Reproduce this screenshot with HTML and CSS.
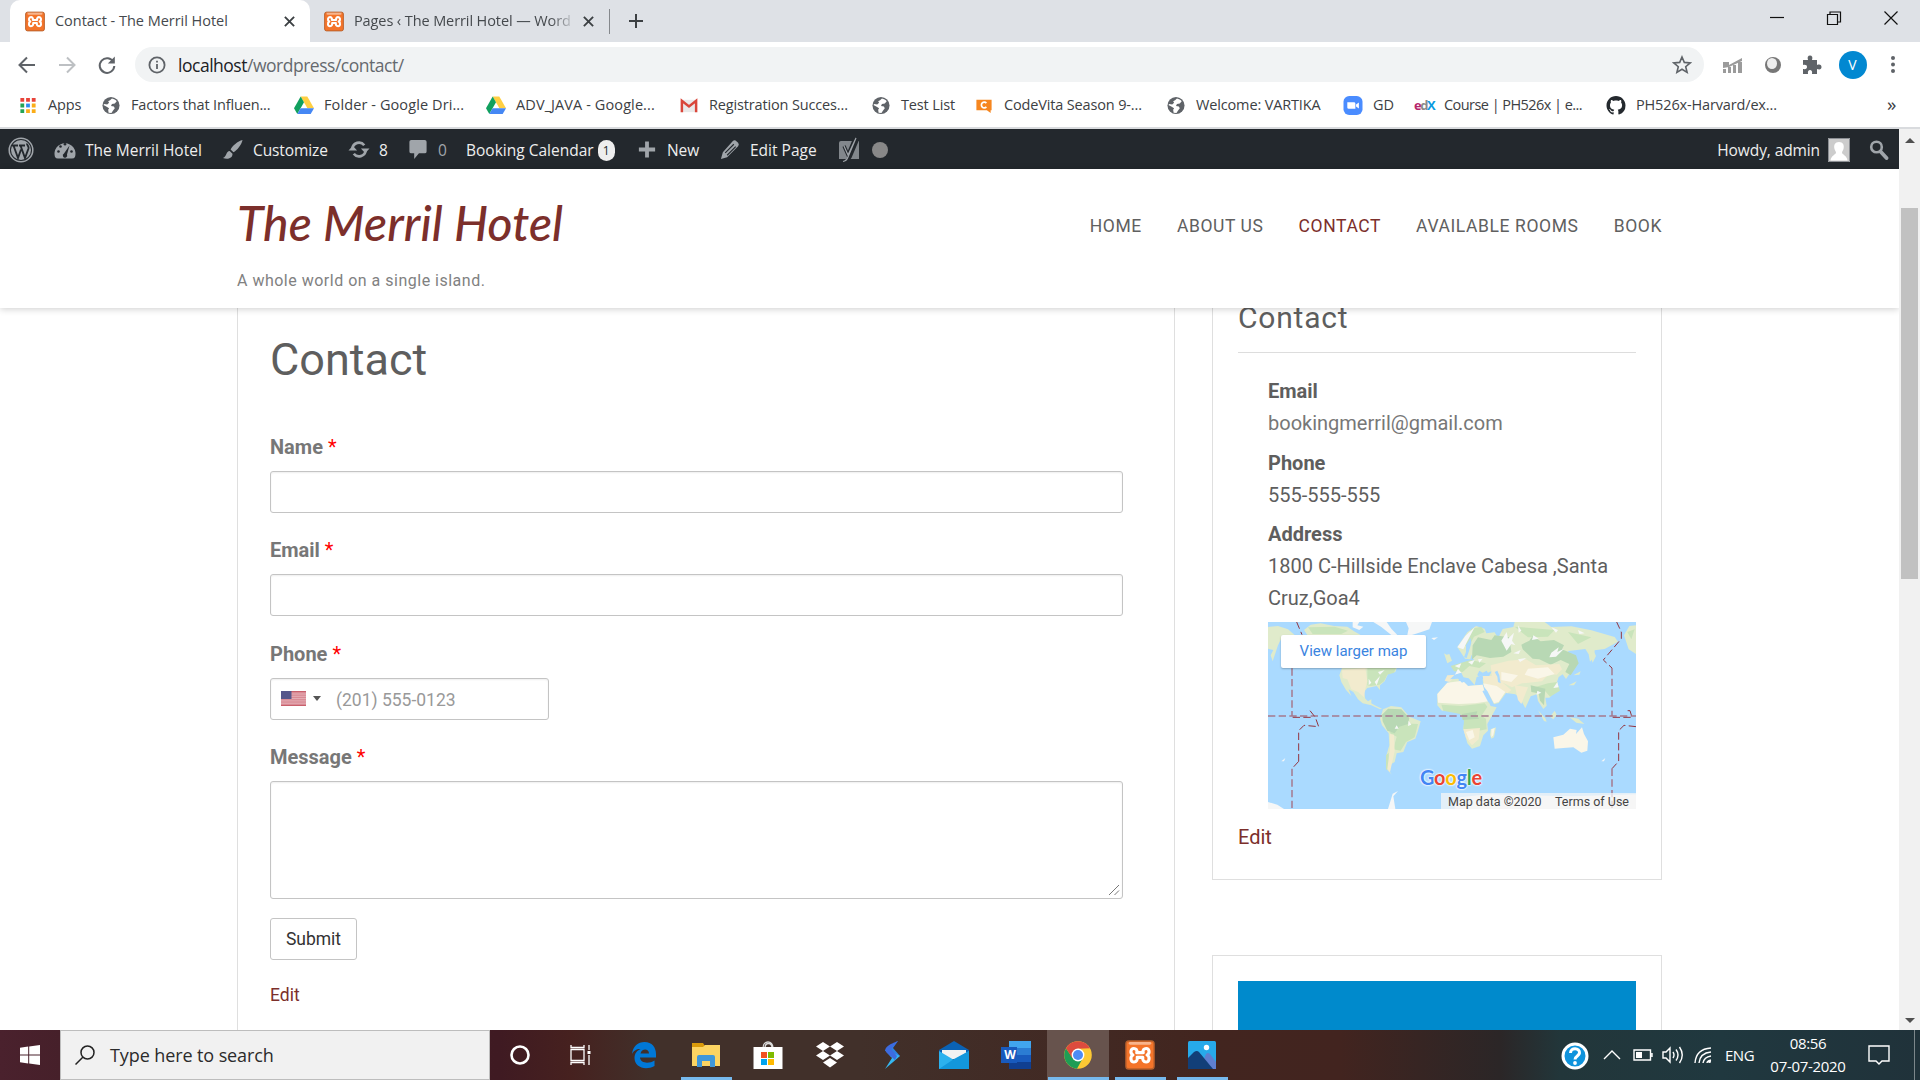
FILE: index.html
```html
<!DOCTYPE html>
<html lang="en">
<head>
<meta charset="utf-8">
<title>Contact - The Merril Hotel</title>
<link rel="stylesheet" href="styles.css">
</head>
<body>
<svg class="defs" width="0" height="0" aria-hidden="true">
  <symbol id="xampp" viewBox="0 0 32 32">
    <rect x="1" y="1" width="30" height="30" rx="3" fill="#f4742a" stroke="#b9602b" stroke-width="1.500"/>
    <rect x="4" y="2" width="24" height="3" rx="1.500" fill="#f8b48c"/>
    <path d="M12.500 13.500c1-3-1-4.500-3-4.500-3.500 0-4.500 5-1 7-3.500 2-2.500 7.500 1 7.500 3 0 4-2.500 3.500-5h6c-.5 2.500.5 5 3.500 5 3.500 0 4.500-5.500 1-7.500 3.500-2 2.500-7-1-7-2 0-4 1.500-3 4.500z" fill="none" stroke="#fff" stroke-width="3.300" stroke-linejoin="round"/>
  </symbol>
  <symbol id="globe" viewBox="0 0 20 20">
    <circle cx="10" cy="10" r="9" fill="#5f6368"/>
    <path d="M11 2.500c2 .5 4 1.500 5 3l-2 2.500-3 .5-1 2 3 .5 1 2-2 2.500-1.500 2.500-3-.5-.5-3 1-1.500-3-2-3-1.500 1-1 3 .5 2-2-1-1.500 2-1z" fill="#fff"/>
  </symbol>
  <symbol id="drive" viewBox="0 0 20 18">
    <path d="M6.700 0h6.600L20 11.700h-6.600z" fill="#ffcf42"/>
    <path d="M6.700 0L10 5.800 3.300 17.500 0 11.700z" fill="#11a05e"/>
    <path d="M6.600 11.700H20l-3.300 5.800H3.300z" fill="#4587f4"/>
  </symbol>
</svg>

<header class="browser">
  <div class="tabstrip">
    <div class="tab tab-active">
      <svg class="fav"><use href="#xampp"/></svg>
      <span class="tab-title">Contact - The Merril Hotel</span>
      <svg class="tab-close" viewBox="0 0 10 10"><path d="M.8.8l8.400 8.400M9.200.8L.8 9.200"/></svg>
    </div>
    <div class="tab tab-idle">
      <svg class="fav"><use href="#xampp"/></svg>
      <span class="tab-title fade">Pages ‹ The Merril Hotel — Word</span>
      <svg class="tab-close" viewBox="0 0 10 10"><path d="M.8.8l8.400 8.400M9.200.8L.8 9.200"/></svg>
    </div>
    <svg class="new-tab" viewBox="0 0 16 16"><path d="M8 1v14M1 8h14"/></svg>
    <div class="win-buttons">
      <svg viewBox="0 0 16 16"><path d="M1 7.500h14"/></svg>
      <svg viewBox="0 0 16 16"><path d="M1.500 4.500h10v10h-10zM4 4.500v-2.500h10.500v10h-3"/></svg>
      <svg viewBox="0 0 16 16"><path d="M1.500 1.500l13 13M14.500 1.500l-13 13"/></svg>
    </div>
  </div>

  <div class="toolbar">
    <div class="nav-buttons">
      <svg viewBox="0 0 20 20"><path d="M18 10H3M10 2.500L2.500 10l7.500 7.500"/></svg>
      <svg class="dim" viewBox="0 0 20 20"><path d="M2 10h15M10 2.500l7.500 7.500-7.500 7.500"/></svg>
      <svg viewBox="0 0 20 20"><path d="M16.500 7.200A7.300 7.300 0 1 0 17.300 11"/><path d="M17.800 1.500v7h-7z" class="solid"/></svg>
    </div>
    <div class="omnibox">
      <svg class="info" viewBox="0 0 18 18"><circle cx="9" cy="9" r="7.600"/><path d="M9 8v5M9 4.800v1.700"/></svg>
      <span class="url"><b>localhost</b>/wordpress/contact/</span>
      <svg class="star" viewBox="0 0 20 20"><path d="M10 2l2.300 5.400 5.900.5-4.500 3.800 1.400 5.700L10 14.300l-5.100 3.100 1.400-5.700-4.500-3.800 5.900-.5z"/></svg>
    </div>
    <div class="extensions">
      <svg viewBox="0 0 22 22"><g fill="#9b9b9b"><path d="M1 19v-4h3v4zM6 19v-6h3v6zM11 19v-8h3v8zM16 19V8h4v11z"/><path d="M1 8h6v3l13-7v3L7 13l-6 1z"/></g></svg>
      <svg viewBox="0 0 22 22"><circle cx="11" cy="11" r="8" fill="#777"/><ellipse cx="10" cy="9.500" rx="5" ry="5.500" fill="#eee"/></svg>
      <svg viewBox="0 0 22 22"><path d="M2 6h5c-1-3 0-4.500 2-4.500s3 1.500 2 4.500h5v5c3-1 4.500 0 4.500 2s-1.500 3-4.500 2v5h-5c.5-3-.5-4-2-4s-2.500 1-2 4H2v-5c3 .5 4-.5 4-2s-1-2.500-4-2z" fill="#5f6368"/></svg>
      <span class="profile">V</span>
      <svg viewBox="0 0 22 22"><g fill="#5f6368"><circle cx="11" cy="4" r="2"/><circle cx="11" cy="10.500" r="2"/><circle cx="11" cy="17" r="2"/></g></svg>
    </div>
  </div>

  <nav class="bookmarks">
    <a><svg viewBox="0 0 20 20"><g fill="#e8433a"><path d="M2 2h4v4H2zM8 2h4v4H8zM14 2h4v4h-4z"/></g><path d="M2 8h4v4H2zM2 14h4v4H2z" fill="#23a455"/><path d="M8 8h4v4H8z" fill="#2d8cf0"/><path d="M14 8h4v4h-4zM8 14h4v4H8zM14 14h4v4h-4z" fill="#fbad18"/></svg><span>Apps</span></a>
    <a><svg><use href="#globe"/></svg><span>Factors that Influen...</span></a>
    <a class="wide"><svg><use href="#drive"/></svg><span>Folder - Google Dri...</span></a>
    <a class="wide"><svg><use href="#drive"/></svg><span>ADV_JAVA - Google...</span></a>
    <a><svg viewBox="0 0 20 20"><path d="M2 4h16v13H2z" fill="#e9e9e9"/><path d="M2.500 17V5l7.500 6 7.500-6v12" fill="none" stroke="#d9463a" stroke-width="2.600"/></svg><span>Registration Succes...</span></a>
    <a><svg><use href="#globe"/></svg><span>Test List</span></a>
    <a><svg viewBox="0 0 20 20"><path d="M2 4h16v11h-1v3l-4-3H2z" fill="#f6861f"/><path d="M12.500 7.500a3 3 0 1 0 0 4" fill="none" stroke="#fff" stroke-width="1.800"/></svg><span>CodeVita Season 9-...</span></a>
    <a><svg><use href="#globe"/></svg><span>Welcome: VARTIKA</span></a>
    <a><svg viewBox="0 0 20 20"><rect width="20" height="20" rx="6" fill="#4a8cff"/><path d="M4 6.500h7a1.500 1.500 0 0 1 1.500 1.500v5.500h-7A1.500 1.500 0 0 1 4 12zM13.200 9l3-2.200v6.400l-3-2.200z" fill="#fff"/></svg><span>GD</span></a>
    <a class="tight"><i class="edx"><b>e</b><em>d</em><u>X</u></i><span>Course | PH526x | e...</span></a>
    <a><svg viewBox="0 0 16 16"><path fill="#24292e" d="M8 0C3.580 0 0 3.580 0 8c0 3.540 2.290 6.530 5.470 7.590.4.070.55-.17.55-.38 0-.19-.01-.82-.01-1.490-2.010.37-2.530-.49-2.690-.94-.09-.23-.48-.94-.82-1.130-.28-.15-.68-.52-.01-.53.63-.01 1.080.58 1.230.82.72 1.210 1.870.87 2.330.66.070-.52.28-.87.51-1.070-1.780-.2-3.640-.89-3.640-3.950 0-.87.31-1.590.82-2.150-.08-.2-.36-1.020.08-2.120 0 0 .67-.21 2.200.82.64-.18 1.320-.27 2-.27s1.360.09 2 .27c1.530-1.040 2.200-.82 2.200-.82.44 1.100.16 1.920.08 2.120.51.56.82 1.270.82 2.150 0 3.070-1.870 3.750-3.650 3.950.29.25.54.73.54 1.480 0 1.070-.01 1.930-.01 2.200 0 .21.15.46.55.38A8.010 8.010 0 0 0 16 8c0-4.420-3.580-8-8-8z"/></svg><span>PH526x-Harvard/ex...</span></a>
    <span class="more">»</span>
  </nav>
</header>

<div class="viewport">
  <div class="page">
    <div class="adminbar">
      <svg class="ab-logo" viewBox="0 0 26 26"><circle cx="13" cy="13" r="11.800" fill="none" stroke="#a0a5aa" stroke-width="1.500"/><circle cx="13" cy="13" r="10" fill="#a0a5aa"/><path d="M4 8.500h6M5.500 8.500L10 21l3-8.500M11 8.500h6M12.500 8.500L17 21l3.500-9.500c.8-2.500-1.800-3-1.500-5" fill="none" stroke="#23282d" stroke-width="1.900"/></svg>
      <div class="ab ab-site"><svg viewBox="0 0 22 20"><path d="M1 17.500a10.500 10.500 0 1 1 20 0q-1 1.500-3 1.500H4q-2 0-3-1.500z" fill="#a0a5aa"/><g fill="#23282d"><circle cx="4.500" cy="12" r="1.300"/><circle cx="6.500" cy="7" r="1.300"/><circle cx="11" cy="4.800" r="1.300"/><circle cx="17.500" cy="12" r="1.300"/><path d="M15.500 6l-2.500 9a2.200 2.200 0 1 1-3-1z"/></g></svg><span>The Merril Hotel</span></div>
      <div class="ab ab-customize"><svg viewBox="0 0 22 22"><path d="M21 1c-5 1-11 6.500-12.500 10l3 3C15 12 20 6 21 1zM7.500 12.500c-4 .5-2.500 5-7 7.500 4 1.500 10 1 10-4.500z" fill="#a0a5aa"/></svg><span>Customize</span></div>
      <div class="ab ab-updates"><svg viewBox="0 0 22 22"><g fill="none" stroke="#a0a5aa" stroke-width="2.800"><path d="M4 10a7 7 0 0 1 12.500-3.500M18 12A7 7 0 0 1 5.500 15.500"/></g><path d="M13 10h9l-4.500 5zM0 12h9L4.500 7z" fill="#a0a5aa"/></svg><span>8</span></div>
      <div class="ab ab-comments"><svg viewBox="0 0 22 22"><path d="M4 1h14q2 0 2 2v10q0 2-2 2h-6l-5 6v-6H4q-2 0-2-2V3q0-2 2-2z" fill="#a0a5aa"/></svg><span>0</span></div>
      <div class="ab ab-booking"><span>Booking Calendar</span><span class="badge">1</span></div>
      <div class="ab ab-new"><svg viewBox="0 0 22 22"><path d="M11 2.500v17M2.500 11h17" stroke="#a0a5aa" stroke-width="4"/></svg><span>New</span></div>
      <div class="ab ab-edit"><svg viewBox="0 0 22 22"><path d="M14 2q2-1.500 4 .5l1.500 1.500q1.500 2 0 3.500L8 19l-6.500 2 2-7z" fill="#a0a5aa"/><path d="M15 5.500L6 14.500M17 8l-9 9" stroke="#23282d" stroke-width="1.200"/></svg><span>Edit Page</span></div>
      <svg class="ab-yoast" viewBox="0 0 22 26"><path d="M3 4h18v18H1V6q0-2 2-2z" fill="#82878c"/><path d="M6 9l4 9L17 1h3l-8 19q-2 4-6 5" fill="none" stroke="#23282d" stroke-width="3.400"/><path d="M6 9l4 9L18 1l-8 19q-1.500 4-5 4.500" fill="none" stroke="#a0a5aa" stroke-width="1.200"/></svg>
      <i class="dot"></i>
      <div class="ab-right"><span>Howdy, admin</span>
        <svg class="gravatar" viewBox="0 0 22 24"><path d="M0 0h22v24H0z" fill="#ccc"/><path d="M11 4c4 0 5.500 3 4.500 7-.4 1.500-1.500 2.500-1.500 3.500 0 2 5 3 5.500 8h-17c.5-5 5.500-6 5.500-8 0-1-1.100-2-1.500-3.500C5.500 7 7 4 11 4z" fill="#fff"/><path d="M.5.5h21v23H.5z" fill="none" stroke="#8c8f94"/></svg>
        <svg class="ab-search" viewBox="0 0 20 20"><circle cx="7.500" cy="7" r="5.300" fill="none" stroke="#a0a5aa" stroke-width="2.600"/><path d="M11.500 11.500l6 6.500" stroke="#a0a5aa" stroke-width="3.800" stroke-linecap="round"/></svg>
      </div>
    </div>

    <div class="site-header">
      <div class="brand">
        <div class="site-title">The Merril Hotel</div>
        <div class="tagline">A whole world on a single island.</div>
      </div>
      <nav class="menu"><a>HOME</a><a>ABOUT US</a><a class="current">CONTACT</a><a>AVAILABLE ROOMS</a><a>BOOK</a></nav>
    </div>

    <div class="content">
      <main class="entry">
        <h1>Contact</h1>
        <label>Name <i>*</i></label>
        <div class="field"></div>
        <label>Email <i>*</i></label>
        <div class="field"></div>
        <label>Phone <i>*</i></label>
        <div class="field phone">
          <svg class="flag" viewBox="0 0 25 15"><path fill="#d98a94" d="M0 0h25v15H0z"/><path d="M0 .5h25M0 14.500h25" stroke="#c9606c"/><path d="M0 3h25M0 5.300h25M0 7.600h25M0 9.900h25M0 12.200h25" stroke="#e9b9bf" stroke-width=".8"/><path fill="#56568a" d="M0 0h10.500v8H0z"/></svg>
          <i class="caret"></i><span>(201) 555-0123</span>
        </div>
        <label>Message <i>*</i></label>
        <div class="field message"><svg class="grip" viewBox="0 0 12 12"><path d="M1 11L11 1M6.500 11L11 6.500"/></svg></div>
        <button class="submit">Submit</button>
        <a class="edit">Edit</a>
      </main>

      <aside class="side">
        <section class="widget contact-widget">
          <h2>Contact</h2>
          <dl>
            <dt>Email</dt><dd class="mail">bookingmerril@gmail.com</dd>
            <dt>Phone</dt><dd>555-555-555</dd>
            <dt>Address</dt><dd>1800 C-Hillside Enclave Cabesa ,Santa Cruz,Goa4</dd>
          </dl>
          <div class="map">
            <svg class="world" viewBox="0 0 1104 561" preserveAspectRatio="none">
              <path fill="#aadaff" d="M0 0h1104v561H0z"/>
              <g fill="#e0ebcb">
                <path d="M0 15l30-3 30 10 20 17H45L30 70 24 88 14 118 8 100 16 84 0 80zM108 24l20-16 30-4 40 8 40 2 20 14 20 11H118z"/>
                <path d="M222 138h164l-4 12-22 6-10 22-14 12v14l-10-12-28 6-10 12 4 20 8 8 10-6v12l10 6 22 10-6 2-26-12-26-6-14-12-14-22-14-8 8 20-16-18-14-24-6-20z"/>
                <path d="M345 262l24-10 31 4 24 28 34 14-8 28-8 24-24 10-12 30-20 4-6 26-16 10 2 20 6 8-14-14-4-40 10-34-2-36-20-24-6-20z"/>
                <path d="M508 216l30-34 46-6 16 16 44-4 10 34 14 30 18 4-28 50 2 20-14 14-10 32-24 8-14-16-12-44 4-26-10-20-20-12-38 4-14-16z"/>
                <path d="M568 75l30-44 26-19 26 8 5 14 25-3 10 18 14-28 32-6 4-15h90l20 15 60-2 60 12 70 20 10 14-40 22-30 4-2 20-12 14-4-22-10-16-50 6-12 14 22 12 6 22-24 36-10-14-12 8-8 24-4 22-16 16h-12l4 24-10 10-16-24-4-20-18 6-16 36-16-30-14-12-28-4-22 30-14 4-18-36 4-20-18-2-2-18 20-10 8-14-28 12-18 6-6 24-18-20-20-4-20 22-17 4v-26l22-3 2-20 24-16 26-8-8-20-4 14-16-2z"/>
                <path d="M1068 40l16-28 20-2v86l-22-14zM966 100l10-16 8 18-10 20zM528 94l8 4 8-2 8 20-14 8zM916 160l22-12-4 10zM902 190l24-12-8 12zM668 322l16-6-6 30-8 4-4-12z"/>
                <path d="M810 265l22 24 4 10-8-2zM846 284l14-18 6 12-10 14zM905 286l26 4 18 16-24-4z"/>
              </g>
              <g fill="#c9e4bb">
                <path d="M298 138h86l-6 14-20 6-10 20-14 10-26 4-10-2z"/>
                <path d="M520 248l60 4 70-8 8 10-18 28 14 8 2 32-24 4-46-4 2-26-12-20-50-10zM400 304l50 2-10 40-26 14-16 26-22-4 10-38-22-12 20-10zM354 400l8-8 2 44-10 8z"/>
                <path d="M120 16l80-2 40 12-20 10h-86zM610 20l30-6 10 16-32 14-16 30-14-4zM548 132l60-18 46 10-20 14-30-6-20 18-26-2zM800 196l40-12 28-4 8 26-30 18-14-16-30 4zM740 14l120 10-20 20-60 2zM900 30l70 16-40 20zM1078 30l22-8-10 30z"/>
              </g>
              <g fill="#b8d8b4">
                <path d="M342 278l18-18 40 2 24 26-4 18-26 8-14 20-22-8-14-28zM614 70l16-24 40 8 10-14 44 6 6 44-24 14-40 4-40-8-14 12zM760 68l24-12 10-14 24 16 40-4 30 16-6 12 42 18 8 24-24 36-16-10 12-24-26-12-30 14-34-16-20-2-30-28zM582 276l46-8-4 14 10 8-50 4zM788 190l44 10-4 50-12-14-4-22-22-4z"/>
              </g>
              <g fill="#f2ebce">
                <path d="M222 144l70-6 6 40-6 22-4 26-18-16-20-8-12-30-14-4zM668 130l54-14 52-4 30 18 70-4 8 16-16 16-24-2-20 22-60 6-30 12-60-30zM644 162l36 0 50 42-12 10-40-16-30-14zM586 322l50-4-4 34-20 18-18-22zM366 336l12 2 2 50-14 62-8-10 8-60zM538 160l30-2-24 22-14-4zM740 190l40 6-20 50-10-12z"/>
              </g>
              <g fill="#faf6e8">
                <path d="M508 216l30-34 46-6 16 16 44-4 8 30 10 20-40 6-50 2-62-4zM646 184l40 8 26 18-20 30-14 4-18-34-12-16zM856 346l30-8 20-18 20 4-2 12 18-20 6 20 12 22-2 28-18 6-24-16-30 2-26 2zM700 150l50 10-20 20-30-6zM780 140l60-4 20 20-50 14-40-12zM670 322l10-4-4 22-6 6zM594 330l20-6 6 22-16 8z"/>
              </g>
              <g fill="#f6f7f7">
                <path d="M414 0h78l-8 22-24 8-28 9h-14l4-20zM254 0h20l-6 10 18 4-12 10-20-8zM316 0h40l14 20 18 19h-18l-30-24zM490 48l20-2-12 8zM568 76l24-34 28-26-22 42-12 24zM700 56l16-26 4 20 18-18-6 24 10 14-12-4-14 20zM560 132l20-8-6 14zM600 120l20-6-8 14zM630 112l14-2-10 12zM736 94l22-10-6 12zM850 92l22-16-4 14 20-10-24 24-20 2zM850 16l20 8-6 8zM750 10l10 16-8 6zM796 40l16 10-20 4zM930 24l20 10-16 2zM868 180l4 16-16 2zM808 206l12 6-14 6zM320 180l16-18-10 28zM302 170l8 12-8 8zM330 150l20-6-14 14zM386 310l6 10-12 0zM422 296l8 12-10 4zM570 140l-10 20 20-8zM750 112l26-4-20 12z"/>
                <path d="M0 540l28 8 20 13H0zM360 561l14-46 16-8-14 16 6 38zM560 561v-34l100-10 250 6 194-6v44zM40 418l12-10-4 10zM1000 418l12-10-4 10z"/>
              </g>
              <g fill="#aadaff"><path d="M628 158l6-12 10 6 12-6 8 14-34 2zM680 150l8-4 6 14 4 24-8-4-2-16zM560 158l20-6 12 26-10 4-12-12-24 2zM594 70l14-22 2 14-6 22-8 24-8-2 6-16z"/></g>
              <path d="M646 206l18 34" stroke="#aadaff" stroke-width="6"/>
              <g fill="none" stroke-dasharray="22 10">
                <path d="M0 282h1104M72 139v144M72 440v121M1032 138v144M1032 440v121" stroke="#a5798e" stroke-width="4.500"/>
                <path d="M86 0l16 38M92 418v-92l16-16 44 4-10-28-16-20h-10M92 418l-20 22M74 286h58M1046 0l14 30v20l-54 64 26 24M1104 314l-36-4-16 16v92l-20 22M1034 286h58l-6-20h-10" stroke="#943540" stroke-width="3"/>
              </g>
            </svg>
            <div class="larger">View larger map</div>
            <div class="google"><b>G</b><b>o</b><b>o</b><b>g</b><b>l</b><b>e</b></div>
            <div class="attribution"><span>Map data ©2020</span><span>Terms of Use</span></div>
          </div>
          <a class="edit">Edit</a>
        </section>
        <section class="widget promo"><div></div></section>
      </aside>
    </div>
  </div>
  <div class="scrollbar"><i class="up"></i><div class="thumb"></div><i class="down"></i></div>
</div>

<footer class="taskbar">
  <div class="start"><svg viewBox="0 0 20 20"><path fill="#fff" d="M0 2.800l8.200-1.200v7.900H0zM9.200 1.400L20 0v9.500H9.200zM0 10.500h8.200v7.900L0 17.200zM9.200 10.500H20V20L9.200 18.600z"/></svg></div>
  <div class="search"><svg viewBox="0 0 20 20"><circle cx="12.500" cy="7.500" r="6.500"/><path d="M8 12l-7.500 7.500"/></svg><span>Type here to search</span></div>
  <div class="apps">
    <div><svg viewBox="0 0 30 30"><circle cx="15" cy="15" r="8.500" fill="none" stroke="#fff" stroke-width="2.600"/></svg></div>
    <div><svg viewBox="0 0 30 30"><g fill="none" stroke="#fff" stroke-width="1.300"><path d="M4 9.500h13v11H4zM4 5v2.500h13V5M4 25v-2.500h13V25M22 5v5M22 15v10"/></g><path d="M20.500 11h3v3h-3z" fill="#fff"/></svg></div>
    <div><svg viewBox="0 0 30 30"><path d="M3 14C4 6 9 2 15.500 2 23 2 27 7.500 27 14v3.500H11c.5 6 9 6.500 14.500 3v5.500C16 31 5.500 27 5.500 18c0-4.500 2.500-7.500 6-9C7 9 4.500 11 3 14zm8.500-.5H20c0-5.500-7.500-5.500-8.500 0z" fill="#0078d7"/></svg></div>
    <div class="open"><svg viewBox="0 0 30 30"><path d="M1 3h11l2 3v4H1z" fill="#d99a0b"/><path d="M1 7h11l2-2h15v21H1z" fill="#fcd462"/><path d="M6 27V17q0-2 2-2h14q2 0 2 2v10h-5v-6h-8v6z" fill="#3f97d9"/></svg></div>
    <div><svg viewBox="0 0 30 30"><path d="M10 8c0-8 10-8 10 0M12 8c0-6 7-6 7 0" fill="none" stroke="#ddd" stroke-width="1.300"/><path d="M.5 7h29v22H.5z" fill="#fff"/><path d="M8 12h6v6H8z" fill="#f25022"/><path d="M15 12h6v6h-6z" fill="#7fba00"/><path d="M8 19h6v6H8z" fill="#00a4ef"/><path d="M15 19h6v6h-6z" fill="#ffb900"/></svg></div>
    <div><svg viewBox="0 0 30 30"><path fill="#fff" d="M8 2l7 4.500L8 11 1 6.500zM22 2l7 4.500L22 11l-7-4.500zM8 11l7 4.500L8 20l-7-4.500zM22 11l7 4.500L22 20l-7-4.500zM15 18l7 4.500-7 5-7-5z"/></svg></div>
    <div><svg viewBox="0 0 30 30"><path d="M21 1L8 10l6 7 9-1-7-8z" fill="#2f7fe0"/><path d="M14 12l9 4L8 29l7-11-7-8z" fill="#35b7f1"/><path d="M21 1c-8 3-16 7-11 12l8 7 2-4-6-7z" fill="#3d6be0"/></svg></div>
    <div><svg viewBox="0 0 30 30"><path d="M0 10L15 1l15 9v5H0z" fill="#0a62b4"/><path d="M3 10h24v9H3z" fill="#f2f2f2"/><path d="M0 11l15 9 15-9v18H0z" fill="#2cb1ee"/><path d="M0 29l15-10L30 11v18z" fill="#1397dc"/></svg></div>
    <div class="word"><svg viewBox="0 0 30 30"><path d="M8 1h22v7H8z" fill="#41a5ee"/><path d="M8 8h22v7H8z" fill="#2b7cd3"/><path d="M8 15h22v7H8z" fill="#185abd"/><path d="M8 22h22v7H8z" fill="#103f91"/><path d="M0 7h16v16H0z" fill="#185abd"/></svg><b>W</b></div>
    <div class="open current"><svg viewBox="0 0 30 30"><circle cx="15" cy="15" r="13.800" fill="#fcc934"/><path d="M15 15L3 8.200A13.800 13.800 0 0 1 27 8.200L15 8.500z" fill="#dd4b3e"/><path d="M3 8.200A13.800 13.800 0 0 0 14 28.800l6-11-5-2.800-5.500 3z" fill="#1e9d55"/><path d="M3 8.200l6.200 9.800L15 9h12" fill="#dd4b3e"/><circle cx="15" cy="15" r="6.400" fill="#fff"/><circle cx="15" cy="15" r="5" fill="#4c8bf5"/></svg></div>
    <div class="open"><svg><use href="#xampp"/></svg></div>
    <div class="open"><svg viewBox="0 0 30 30"><rect x="1" y="1" width="28" height="28" rx="1.500" fill="#27aaea"/><path d="M13 29l6-15q2-2 4 0l6 8v7z" fill="#5f7fd0"/><path d="M1 18l6-6q3-2 5 0l14 17H1z" fill="#123f78"/><circle cx="19.500" cy="7.500" r="2.700" fill="#fff"/></svg></div>
  </div>
  <div class="tray">
    <svg class="t-help" viewBox="0 0 28 28"><circle cx="14" cy="14" r="12" fill="#0f93dc" stroke="#fff" stroke-width="3"/><path d="M9.500 11c0-6 9.500-5.500 9 0-.3 3-4.500 3-4.500 6.500" fill="none" stroke="#fff" stroke-width="3"/><circle cx="14" cy="21" r="1.900" fill="#fff"/></svg>
    <svg class="t-up" viewBox="0 0 18 18"><path d="M1 13l8-8 8 8"/></svg>
    <svg class="t-bat" viewBox="0 0 20 20"><path d="M1 5h16.500v10H1zM19 8v4"/><path d="M3 7h6v6H3z" class="fill"/></svg>
    <svg class="t-vol" viewBox="0 0 22 20"><path d="M1 7h3l4-4v14l-4-4H1zM11 7q2 3 0 6M14 4.500q4 5.500 0 11M17.500 2q5.500 8 0 16"/></svg>
    <svg class="t-wifi" viewBox="0 0 18 18"><path d="M1 17Q2 3 17 2M5 17Q6 7 17 6M9 17q1-6 8-7M13 17q0-2 4-3"/><circle cx="15.500" cy="15.500" r="1.500" class="fill"/></svg>
    <span class="lang">ENG</span>
    <div class="clock"><span>08:56</span><span>07-07-2020</span></div>
    <svg class="t-note" viewBox="0 0 22 22"><path d="M1 2h20v15h-7l-3 3-3-3H1z"/></svg>
    <i class="peek"></i>
  </div>
</footer>
</body>
</html>
```
FILE: styles.css
```css
* { box-sizing: border-box; }
body { margin: 0; width: 1920px; height: 1080px; overflow: hidden; display: flex; flex-direction: column; background: #fff; font-family: Roboto, sans-serif; color: #5e5e5e; }
svg { display: block; flex: none; }
i { font-style: normal; }
.defs { position: absolute; }

/* browser frame */
.browser { flex: none; height: 129px; border-bottom: 2px solid #d9dbde; background: #fff; font-family: "Open Sans", sans-serif; }
.tabstrip { height: 42px; background: #dee1e6; display: flex; align-items: center; padding-left: 10px; }
.tab { display: flex; align-items: center; height: 42px; font-size: 14.500px; letter-spacing: -.03px; color: #45494d; white-space: nowrap; }
.tab-active { width: 300px; padding-left: 15px; background: #fff; border-radius: 10px 10px 0 0; }
.tab-idle { width: 300px; padding-left: 14px; border-right: 1px solid #85888c; height: 25px; letter-spacing: -.1px; }
.fav { width: 20px; height: 21px; }
.tab-title { margin-left: 10px; width: 218px; line-height: 24px; }
.fade { -webkit-mask-image: linear-gradient(90deg, #000 90%, rgba(0,0,0,.25) 99%); mask-image: linear-gradient(90deg, #000 90%, rgba(0,0,0,.25) 99%); }
.tab-close { width: 11px; height: 11px; margin-left: 11px; stroke: #3c4043; stroke-width: 1.700; fill: none; }
.new-tab { width: 16px; height: 16px; margin-left: 18px; stroke: #3c4043; stroke-width: 2; }
.win-buttons { margin-left: auto; display: flex; gap: 41px; padding: 0 21px 6px 0; }
.win-buttons svg { width: 16px; height: 16px; fill: none; stroke: #111; stroke-width: 1.200; }
.toolbar { height: 45px; display: flex; align-items: center; }
.nav-buttons { display: flex; width: 135px; padding-left: 17px; gap: 20px; }
.nav-buttons svg { width: 20px; height: 20px; fill: none; stroke: #5f6368; stroke-width: 2; }
.nav-buttons .dim { stroke: #bdc0c3; }
.nav-buttons .solid { fill: #5f6368; stroke: none; }
.omnibox { width: 1569px; height: 35px; border-radius: 18px; background: #f1f3f4; display: flex; align-items: center; padding: 0 12px 0 13px; }
.info { width: 18px; height: 18px; fill: none; stroke: #5f6368; stroke-width: 1.800; }
.url { margin-left: 12px; font-size: 17.500px; letter-spacing: -.48px; color: #65696e; line-height: 24px; }
.url b { font-weight: 400; color: #202124; }
.star { width: 20px; height: 20px; margin-left: auto; fill: none; stroke: #5f6368; stroke-width: 1.600; }
.extensions { display: flex; align-items: center; padding-left: 18px; gap: 17.500px; }
.extensions svg { width: 22px; height: 22px; }
.profile { width: 28px; height: 28px; margin: 0 -2px 0 -2px; border-radius: 50%; background: #0288d1; color: #fff; font-size: 14px; line-height: 28px; text-align: center; }
.bookmarks { height: 36px; display: grid; grid-template-columns: 83px 193px 192px 193px 192px 103px 192px 177px 71px 192px 276px 1fr; align-items: center; padding-left: 18px; font-size: 14.500px; letter-spacing: -.15px; color: #3c4043; white-space: nowrap; }
.bookmarks a { display: flex; align-items: center; gap: 10px; line-height: 24px; }
.bookmarks .wide { letter-spacing: .1px; }
.bookmarks .tight { letter-spacing: -.55px; }
.bookmarks svg, .edx { width: 20px; height: 19px; }
.edx { display: flex; flex: none; align-items: center; font-size: 13px; letter-spacing: -1.500px; line-height: 19px; }
.edx b { color: #b5246b; } .edx em { color: #8a8a8a; font-style: normal; font-weight: 700; } .edx u { color: #0a9be0; text-decoration: none; font-weight: 700; }
.more { font-size: 19px; padding-bottom: 3px; padding-left: 5px; }

/* viewport */
.viewport { height: 901px; flex: none; display: flex; }
.page { width: 1899px; height: 901px; overflow: hidden; display: flex; flex-direction: column; }
.scrollbar { width: 21px; background: #f1f1f1; display: flex; flex-direction: column; align-items: center; }
.up, .down { width: 0; height: 0; border: 5px solid transparent; }
.up { border-bottom-color: #505050; border-top: 0; margin-top: 9px; }
.down { border-top-color: #505050; border-bottom: 0; margin-top: auto; margin-bottom: 7px; }
.thumb { width: 17px; height: 371px; margin-top: 65px; background: #c1c1c1; }

/* admin bar */
.adminbar { flex: none; height: 40px; background: #23282d; color: #eee; display: flex; align-items: center; padding: 1px 0 0 8px; font-family: "Open Sans", sans-serif; font-size: 15.500px; letter-spacing: -.1px; line-height: 39px; white-space: nowrap; }
.ab { display: flex; align-items: center; gap: 9px; }
.ab span, .ab-right span { padding-top: 1px; }
.ab svg { width: 22px; height: 21px; }
.ab-logo { width: 26px; height: 26px; margin-right: 20px; }
.ab-site { width: 168px; letter-spacing: 0; } .ab-customize { width: 126px; } .ab-updates { width: 59px; }
.ab-comments { width: 59px; color: #a0a5aa; } .ab-booking { width: 170px; gap: 4px; letter-spacing: 0; }
.ab-new { width: 83px; } .ab-edit { width: 119px; letter-spacing: 0; }
.ab .badge { width: 17px; height: 21px; padding: 0; border-radius: 9px; background: #eee; color: #23282d; font-size: 12px; line-height: 21px; text-align: center; margin-top: 2px; }
.ab-yoast { width: 22px; height: 26px; }
.dot { width: 16px; height: 16px; margin-left: 12px; border-radius: 50%; background: #888; }
.ab-right { margin-left: auto; display: flex; align-items: center; padding-right: 10px; }
.gravatar { width: 22px; height: 24px; margin: 0 19px 0 8px; }
.ab-search { width: 20px; height: 20px; }

/* site header */
.site-header { flex: none; height: 139px; padding: 0 237px; display: flex; justify-content: space-between; box-shadow: 0 1px 7px rgba(0,0,0,.2); background: #fff; z-index: 1; }
.site-title { margin-top: 21px; height: 66px; font: italic 500 48px/66px Lato, sans-serif; letter-spacing: .1px; color: #7c2f2b; white-space: nowrap; }
.tagline { margin-top: 14px; font-size: 16px; line-height: 22px; letter-spacing: .5px; color: #818181; }
.menu { display: flex; gap: 35px; font-size: 17.500px; line-height: 24px; letter-spacing: .6px; color: #606060; margin-top: 45px; }
.menu .current { color: #7c2f2b; }

/* content */
.content { display: flex; gap: 37px; padding-left: 237px; }
.entry { width: 938px; height: 722px; border: 1px solid #dfdfdf; border-width: 0 1px; padding: 22px 51px 0 32px; display: flex; flex-direction: column; align-items: flex-start; }
h1 { margin: 0; font-size: 45px; font-weight: 400; line-height: 60px; color: #5e5e5e; }
.entry label { font-size: 20px; font-weight: 700; line-height: 30px; color: #777; margin-top: 22.400px; }
.entry label i { color: #f00; font-weight: 400; }
h1 + label { margin-top: 42px !important; }
.field { width: 853px; height: 42px; margin-top: 9px; border: 1px solid #c4c4c4; border-radius: 3px; box-shadow: inset 0 1px 2px rgba(0,0,0,.07); flex: none; }
.phone { width: 279px; display: flex; align-items: center; padding-left: 10px; font-size: 17.500px; color: #999; }
.phone span { padding-top: 2px; }
.flag { width: 25px; height: 15px; }
.caret { width: 0; height: 0; border: 4px solid transparent; border-top: 5px solid #555; border-bottom: 0; margin: 0 15px 0 7px; }
.message { height: 118px; display: flex; align-items: flex-end; justify-content: flex-end; padding: 2px; }
.grip { width: 12px; height: 12px; stroke: #777; fill: none; }
.submit { width: 87px; height: 42px; margin: 19px 0 0; padding: 0; border: 1px solid #c4c4c4; border-radius: 3px; background: #fff; font: 17.500px Roboto, sans-serif; color: #333; flex: none; }
.entry .edit { margin-top: 23px; font-size: 17.500px; line-height: 24px; color: #7c2f2b; }
.side { width: 450px; }
.widget { border: 1px solid #dfdfdf; padding: 0 25px; }
.contact-widget { display: flow-root; border-top: 0; height: 572px; }
h2 { margin: -9px 0 0; height: 54px; border-bottom: 1px solid #ddd; font-size: 30px; line-height: 37px; font-weight: 400; letter-spacing: .8px; }
dl { margin: 22px 0 0 30px; font-size: 20px; line-height: 32px; white-space: normal; }
dt { font-weight: 700; } dd { margin: 0 -5px 7.500px 0; } .mail { color: #777; }
.map { position: relative; width: 368px; height: 187px; margin: 0 0 0 30px; overflow: hidden; }
.world { width: 368px; height: 187px; }
.larger { position: absolute; left: 13px; top: 13px; width: 145px; height: 33px; background: #fff; border-radius: 2px; box-shadow: 0 1px 2px rgba(0,0,0,.25); color: #3a84df; font-size: 15px; line-height: 33px; text-align: center; }
.google { position: absolute; left: 152px; top: 142px; font: 20px/26px Lato, sans-serif; letter-spacing: -.3px; text-shadow: 0 0 2px #fff, 0 0 2px #fff, 0 0 2px #fff; }
.google b { font-weight: 700; color: #4285f4; } .google b:nth-child(2), .google b:nth-child(6) { color: #ea4335; } .google b:nth-child(3) { color: #fbbc05; } .google b:nth-child(5) { color: #34a853; }
.attribution { position: absolute; right: 0; bottom: 0; width: 195px; height: 16px; padding: 0 7px; background: rgba(245,245,245,.75); display: flex; justify-content: space-between; font-size: 12.500px; line-height: 17px; color: #444; white-space: nowrap; }
.contact-widget .edit { display: block; margin-top: 12px; font-size: 20px; line-height: 32px; color: #7c2f2b; }
.promo { margin-top: 75px; padding-top: 25px; height: 200px; }
.promo div { height: 170px; background: #008acc; }

/* taskbar */
.taskbar { flex: none; height: 50px; display: flex; color: #fff; font-family: "Open Sans", sans-serif; background: linear-gradient(90deg, #4a212d 0, #46202a 60px, #3f1a22 500px, #46211f 570px, #41302a 650px, #41302a 860px, #42251f 1210px, #42241f 1340px, #2b2627 1500px, #22363a 1560px, #20383f 1720px, #20323a 1920px); }
.start { width: 60px; display: flex; align-items: center; justify-content: center; }
.start svg { width: 20px; height: 20px; }
.search { width: 430px; background: #f1f1f1; border: 1px solid #bdbdbd; display: flex; align-items: center; padding-left: 14px; gap: 15px; font-size: 18px; letter-spacing: -.1px; color: #2b2b2b; }
.search svg { width: 20px; height: 20px; fill: none; stroke: #222; stroke-width: 1.500; }
.apps { display: flex; margin-left: -1px; }
.apps div { width: 62px; height: 50px; display: flex; align-items: center; justify-content: center; }
.apps svg { width: 30px; height: 30px; }
.apps .open { background: linear-gradient(#76b9ed, #76b9ed) center bottom / 51px 3px no-repeat; }
.apps .current { background: linear-gradient(#76b9ed, #76b9ed) center bottom / 61px 3px no-repeat, #67534d; }
.word { position: relative; }
.word b { position: absolute; left: 17px; top: 16px; width: 16px; font-size: 12px; line-height: 18px; text-align: center; }
.tray { margin-left: auto; display: flex; align-items: center; }
.tray svg { fill: none; stroke: #fff; stroke-width: 1.400; }
.tray .fill { fill: #fff; stroke: none; }
.tray .t-help { width: 28px; height: 28px; margin-right: 14px; margin-top: 2px; stroke: none; }
.t-up { width: 18px; height: 18px; margin-right: 12px; }
.t-bat { width: 20px; height: 20px; margin-right: 9px; }
.t-vol { width: 22px; height: 20px; margin-right: 10px; }
.t-wifi { width: 18px; height: 18px; margin-right: 13px; }
.lang { width: 42px; font-size: 15px; letter-spacing: -.5px; }
.clock { width: 82px; display: flex; flex-direction: column; align-items: center; font-size: 15px; line-height: 23px; letter-spacing: -.3px; }
.t-note { width: 22px; height: 22px; margin-left: 19px; }
.peek { width: 1px; height: 50px; background: #7c868a; margin: 0 5px 0 24px; }
```
